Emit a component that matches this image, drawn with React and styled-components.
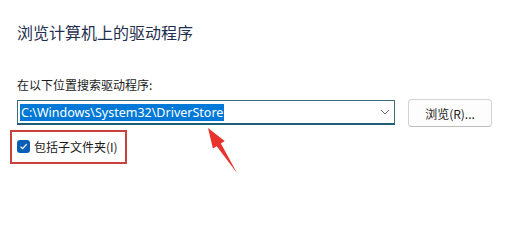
import React from 'react'
import styled, { createGlobalStyle } from 'styled-components'

const GlobalStyle = createGlobalStyle`
    html, body {
        margin: 0;
        padding: 0;
        background: #ffffff;
    }
    body {
        font-family: 'Noto Sans', 'Noto Sans CJK SC', sans-serif;
    }
`

const Page = styled.div`
    position: relative;
    width: 505px;
    height: 247px;
    padding: 22px 0 0 17px;
    box-sizing: border-box;
    overflow: hidden;
`

const Title = styled.h1`
    margin: 0;
    font-family: 'Noto Sans CJK SC', sans-serif;
    font-weight: 400;
    font-size: 16px;
    line-height: 20px;
    color: #1f2f4f;
`

const Label = styled.div`
    margin-top: 35px;
    font-family: 'Noto Sans CJK SC', sans-serif;
    font-size: 12px;
    line-height: 16px;
    color: #1a1a1a;
`

const Row = styled.div`
    display: flex;
    align-items: flex-start;
    gap: 13px;
    margin-top: 6px;
`

const Combo = styled.div`
    display: flex;
    align-items: center;
    justify-content: space-between;
    width: 378px;
    height: 25px;
    margin-top: 1px;
    box-sizing: border-box;
    padding: 0 4px 0 2px;
    border: 1px solid #3a6e7e;
    border-bottom: 2px solid #1d5d77;
    background: #ffffff;
`

const Selected = styled.span`
    background: #0078d7;
    color: #ffffff;
    font-family: 'Noto Sans', sans-serif;
    font-size: 12.5px;
    line-height: 17px;
    padding: 0 1px;
`

const Button = styled.button`
    width: 84px;
    height: 28px;
    box-sizing: border-box;
    border: 1px solid #d3d3d3;
    border-bottom-color: #bcbcbc;
    border-radius: 4px;
    background: #fdfdfd;
    font-family: 'Noto Sans CJK SC', sans-serif;
    font-size: 12px;
    color: #1a1a1a;
    padding: 0;
`

const CheckRow = styled.div`
    display: inline-flex;
    align-items: center;
    gap: 4px;
    margin: 3px 0 0 -7px;
    width: 117px;
    height: 34px;
    box-sizing: border-box;
    padding: 0 0 2px 5px;
    border: 2px solid #c8413f;
`

const Box = styled.span`
    display: inline-flex;
    align-items: center;
    justify-content: center;
    width: 13px;
    height: 13px;
    border-radius: 3px;
    background: #0a5fb4;
`

const CheckText = styled.span`
    font-family: 'Noto Sans CJK SC', sans-serif;
    font-size: 12px;
    color: #1a1a1a;
`

const Arrow = styled.svg`
    position: absolute;
    left: 0;
    top: 0;
    pointer-events: none;
`

const App = () => (
    <>
        <GlobalStyle />
        <Page>
            <Title>浏览计算机上的驱动程序</Title>
            <Label>在以下位置搜索驱动程序:</Label>
            <Row>
                <Combo>
                    <Selected>C:\Windows\System32\DriverStore</Selected>
                    <svg width="10" height="6" viewBox="0 0 10 6">
                        <path d="M1 1 L5 5 L9 1" fill="none" stroke="#6b6b6b" strokeWidth="1" />
                    </svg>
                </Combo>
                <Button>浏览(R)...</Button>
            </Row>
            <CheckRow>
                <Box>
                    <svg width="9" height="9" viewBox="0 0 9 9">
                        <path d="M1.5 4.6 L3.6 6.6 L7.6 2.2" fill="none" stroke="#ffffff" strokeWidth="1.3" />
                    </svg>
                </Box>
                <CheckText>包括子文件夹(I)</CheckText>
            </CheckRow>
            <Arrow width="505" height="247" viewBox="0 0 505 247">
                <polygon
                    points="208,128 224.7,141 220.9,143.5 237,173 216.7,146.2 212.9,148.6"
                    fill="#e8322e"
                />
            </Arrow>
        </Page>
    </>
)

export default App
